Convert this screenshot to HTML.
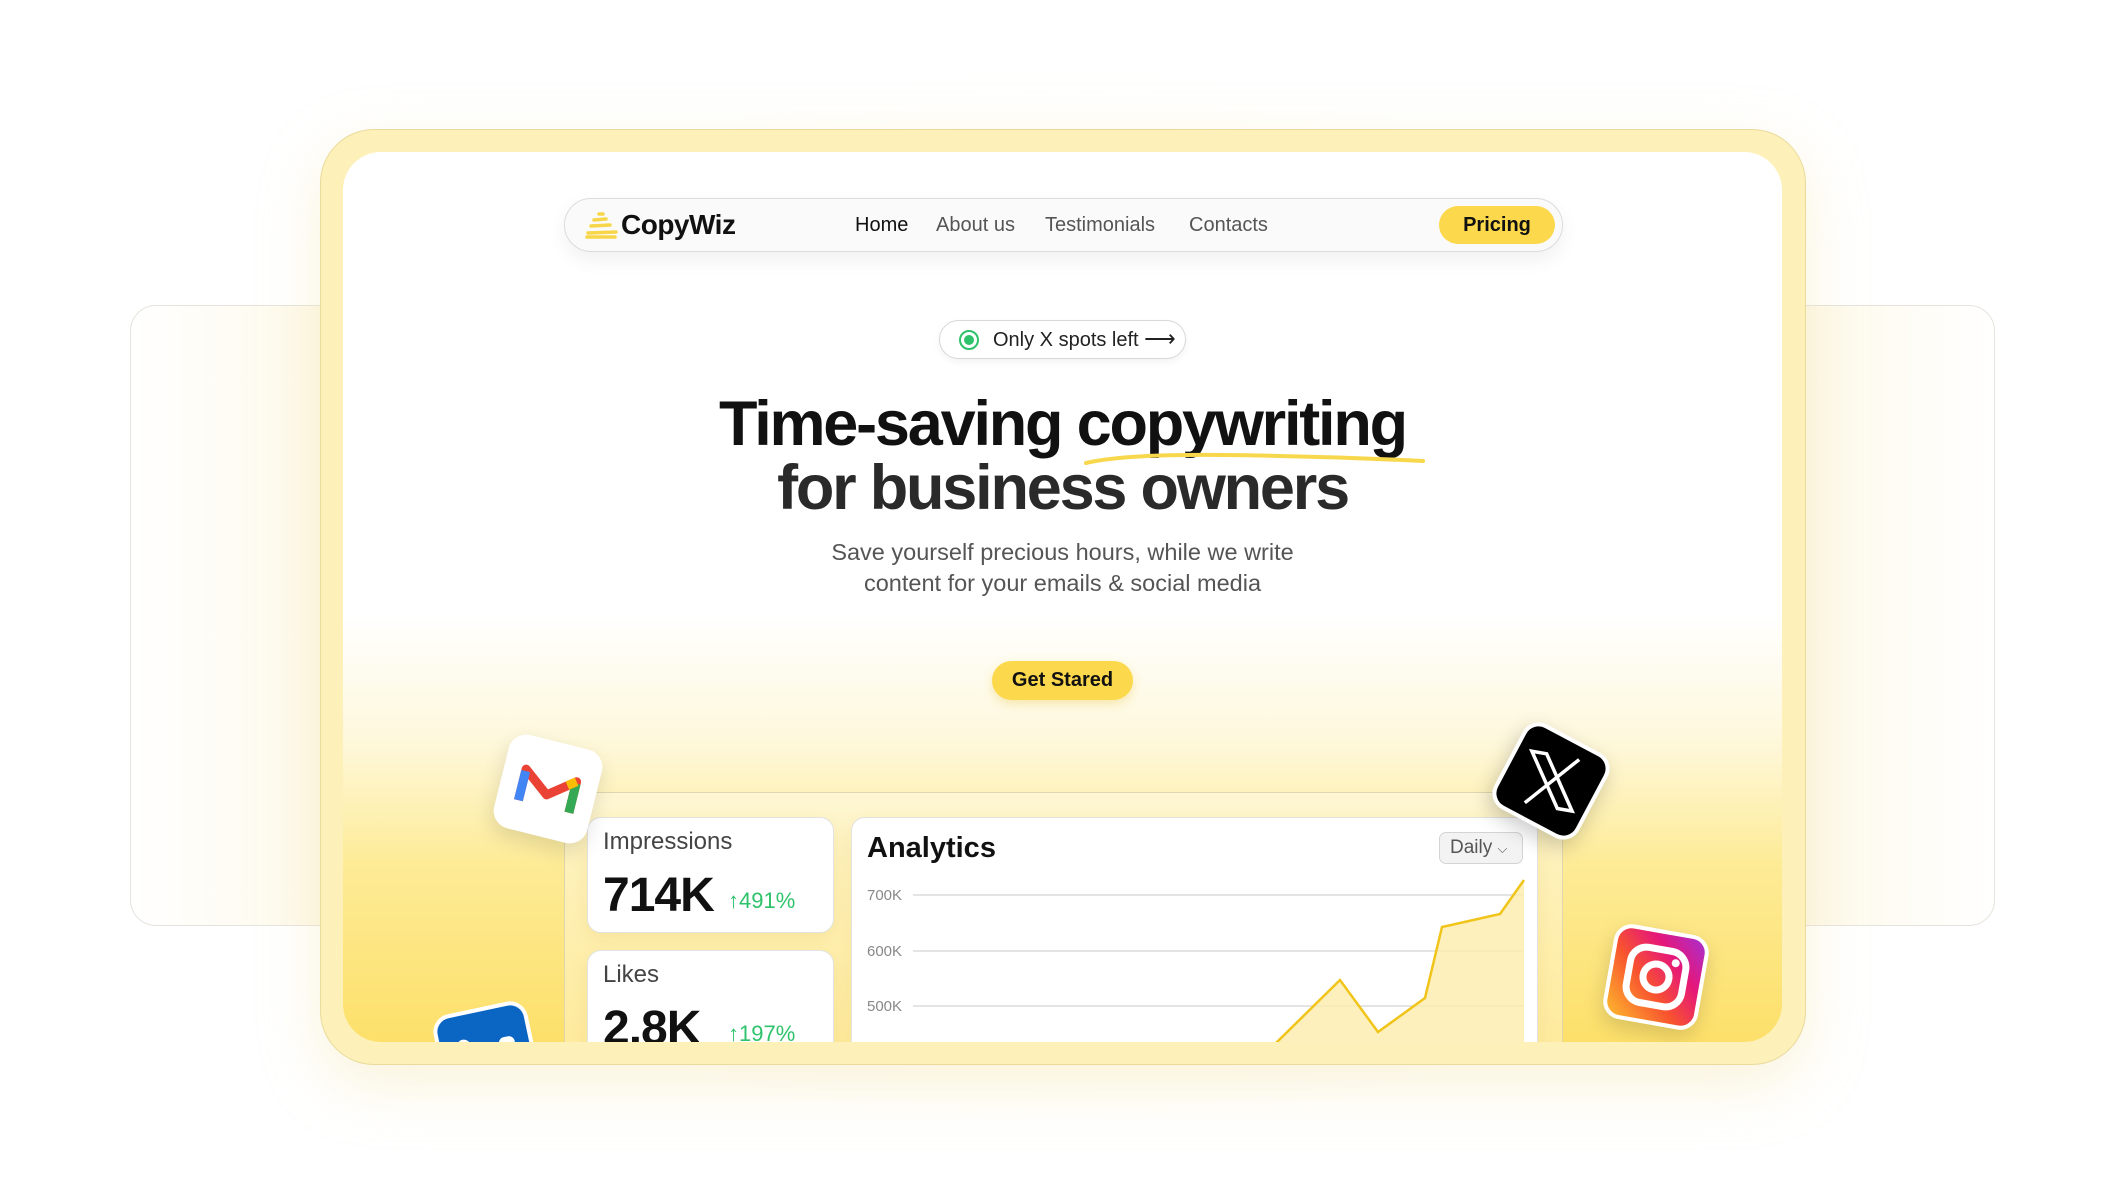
<!DOCTYPE html>
<html><head><meta charset="utf-8"><style>
*{margin:0;padding:0;box-sizing:border-box}
body{width:2127px;height:1194px;background:#fff;position:relative;overflow:hidden;font-family:"Liberation Sans",sans-serif}
.side{position:absolute;left:130px;top:305px;width:1865px;height:621px;border:1.5px solid #e6e3dc;border-radius:26px;background:linear-gradient(90deg,#fff 0%,#fdf8e6 12%,#fff 20%,#fff 80%,#fdf8e6 88%,#fff 100%)}
.glow{position:absolute;left:250px;top:60px;width:1630px;height:1080px;border-radius:120px;background:radial-gradient(ellipse at center,rgba(253,238,180,.35),rgba(255,255,255,0) 70%)}
.frame{position:absolute;left:320px;top:129px;width:1486px;height:936px;border-radius:54px;background:#fdf0b8;border:1.5px solid #eadb9c;box-shadow:0 20px 60px rgba(240,220,150,.35)}
.inner{position:absolute;left:343px;top:152px;width:1439px;height:890px;border-radius:38px;overflow:hidden;background:linear-gradient(180deg,#fff 0%,#fff 52%,#fef8dc 66%,#fdeb96 80%,#fde06a 100%)}
.nav{position:absolute;left:221px;top:46px;width:999px;height:54px;border-radius:27px;background:#fafafa;border:1.5px solid #dcdcdc;box-shadow:0 8px 20px rgba(0,0,0,.06)}
.nav a{position:absolute;top:15px;font-size:20px;color:#555;text-decoration:none}
.logo{position:absolute;left:56px;top:10px;font-size:28px;font-weight:bold;color:#111;letter-spacing:-.5px}
.pricing{position:absolute;left:874px;top:7px;width:116px;height:38px;border-radius:19px;background:#fcd94c;font-weight:bold;font-size:20px;text-align:center;line-height:38px;color:#111}
.badge{position:absolute;left:596px;top:168px;width:247px;height:39px;border-radius:20px;border:1.5px solid #d8d8d8;background:#fff;box-shadow:0 3px 8px rgba(0,0,0,.05);font-size:20px;color:#222;line-height:36px;padding-left:53px}
.dot{position:absolute;left:19px;top:9px;width:20px;height:20px;border-radius:50%;border:2px solid #2ec36b}
.dot:after{content:"";position:absolute;left:3px;top:3px;width:10px;height:10px;border-radius:50%;background:#2ec36b}
h1{position:absolute;left:0;width:1439px;top:240px;text-align:center;font-size:63px;line-height:64px;font-weight:bold;color:#111;letter-spacing:-2.2px}
h1 .l2{color:#2a2a2a}
.sub{position:absolute;left:0;width:1439px;top:385px;text-align:center;font-size:23.5px;line-height:31px;color:#555}
.cta{position:absolute;left:649px;top:509px;width:141px;height:39px;border-radius:20px;background:#fcd94c;font-weight:bold;font-size:20px;text-align:center;line-height:39px;color:#111;box-shadow:0 4px 10px rgba(230,190,40,.3)}
.dash{position:absolute;left:221px;top:640px;width:999px;height:300px;border-radius:16px;background:rgba(255,255,255,.35);border:1.5px solid #e0d6ae}
.card{position:absolute;background:#fff;border-radius:14px;border:1.5px solid #e2e2e2;box-shadow:0 6px 16px rgba(200,170,60,.15)}
.card .t{position:absolute;left:15px;top:10px;font-size:24px;color:#444}
.card .v{position:absolute;left:15px;top:50px;font-size:48px;font-weight:bold;color:#111;letter-spacing:-1px}
.card .p{position:absolute;left:140px;top:70px;font-size:22px;color:#2ec36b}
.icon{position:absolute;width:96px;height:96px;border-radius:18px}
</style></head><body>
<div class="glow"></div>
<div class="side"></div>
<div class="frame"></div>
<div class="inner">
  <div class="nav">
    <svg style="position:absolute;left:20px;top:13px" width="34" height="28" viewBox="0 0 34 28"><path d="M14 2 L18 2 M9 8 L21 7 M6 14 L25 13 M3 21 L31 20 M2 25 L30 25" stroke="#f8d64a" stroke-width="3.5" stroke-linecap="round" fill="none"/></svg>
    <div class="logo">CopyWiz</div>
    <a style="left:290px;color:#111;font-weight:500">Home</a>
    <a style="left:371px">About us</a>
    <a style="left:480px">Testimonials</a>
    <a style="left:624px">Contacts</a>
    <div class="pricing">Pricing</div>
  </div>
  <div class="badge"><div class="dot"></div>Only X spots left <span style="font-size:22px">⟶</span></div>
  <h1>Time-saving copywriting<br><span class="l2">for business owners</span></h1>
  <svg style="position:absolute;left:740px;top:297px" width="345" height="20"><path d="M3 14 Q40 5 140 6 T340 12" stroke="#f7d84c" stroke-width="4" fill="none" stroke-linecap="round"/></svg>
  <div class="sub">Save yourself precious hours, while we write<br>content for your emails &amp; social media</div>
  <div class="cta">Get Stared</div>
  <div class="dash">
    <div class="card" style="left:22px;top:24px;width:247px;height:116px"><div class="t">Impressions</div><div class="v">714K</div><div class="p">↑491%</div></div>
    <div class="card" style="left:22px;top:157px;width:247px;height:160px"><div class="t">Likes</div><div class="v">2.8K</div><div class="p">↑197%</div></div>
    <div class="card" style="left:286px;top:24px;width:687px;height:300px;overflow:hidden">
      <div style="position:absolute;left:15px;top:14px;font-size:29px;font-weight:bold;color:#111">Analytics</div>
      <div style="position:absolute;left:587px;top:14px;width:84px;height:32px;border:1.5px solid #d4d4d4;border-radius:7px;background:#f3f3f3;font-size:19px;color:#555;line-height:29px;padding-left:10px">Daily <span style="font-size:13px">⌵</span></div>
      <svg style="position:absolute;left:0;top:0" width="687" height="300">
        <g font-family="Liberation Sans" font-size="15" fill="#888"><text x="15" y="82">700K</text><text x="15" y="138">600K</text><text x="15" y="193">500K</text></g>
        <g stroke="#e4e4e4" stroke-width="2"><line x1="61" y1="77" x2="671" y2="77"/><line x1="61" y1="133" x2="671" y2="133"/><line x1="61" y1="188" x2="671" y2="188"/></g>
        <path d="M424 225 L488 162 L526 214 L573 180 L590 109 L648 96 L672 62 L672 300 L424 300Z" fill="#fcecac" opacity=".8"/>
        <path d="M424 225 L488 162 L526 214 L573 180 L590 109 L648 96 L672 62" stroke="#f0c419" stroke-width="2.5" fill="none"/>
      </svg>
    </div>
  </div>
  <!-- gmail -->
  <div class="icon" style="left:157px;top:589px;background:#fff;transform:rotate(14deg);box-shadow:0 8px 20px rgba(0,0,0,.12)">
    <svg width="96" height="96" viewBox="0 0 96 96"><path d="M22 66 V34 L48 54 L74 34 V66" fill="none" stroke="#ea4335" stroke-width="9" stroke-linejoin="round"/><path d="M22 66 V36" stroke="#4285f4" stroke-width="9"/><path d="M74 66 V36" stroke="#34a853" stroke-width="9"/><path d="M66 40 L74 34" stroke="#fbbc04" stroke-width="9"/></svg>
  </div>
  <!-- x -->
  <div class="icon" style="left:1160px;top:581px;background:#000;border:4px solid #fff;transform:rotate(28deg);box-shadow:0 8px 20px rgba(0,0,0,.2)">
    <svg width="88" height="88" viewBox="0 0 88 88" style="transform:rotate(-18deg)"><path d="M20 18 L35 18 L70 70 L55 70Z" fill="none" stroke="#fff" stroke-width="3.5"/><path d="M68 18 L22 70" stroke="#fff" stroke-width="3.5"/></svg>
  </div>
  <!-- instagram -->
  <div class="icon" style="left:1265px;top:777px;background:linear-gradient(45deg,#fdb92d 0%,#f8542e 40%,#e5177a 70%,#a830d0 100%);border:4px solid #fff;transform:rotate(10deg);box-shadow:0 8px 20px rgba(0,0,0,.15)">
    <svg width="88" height="88" viewBox="0 0 88 88"><rect x="16" y="16" width="56" height="56" rx="16" fill="none" stroke="#fff" stroke-width="7"/><circle cx="44" cy="44" r="13" fill="none" stroke="#fff" stroke-width="7"/><circle cx="61" cy="27" r="4" fill="#fff"/></svg>
  </div>
  <!-- blue -->
  <div class="icon" style="left:96px;top:855px;background:#0a66c2;border:4px solid #fff;transform:rotate(-12deg)">
    <div style="position:absolute;left:16px;top:24px;width:14px;height:14px;border-radius:50%;background:#fff"></div>
    <div style="position:absolute;left:58px;top:30px;width:16px;height:14px;border-radius:6px;background:#fff"></div>
  </div>
</div>
</body></html>
